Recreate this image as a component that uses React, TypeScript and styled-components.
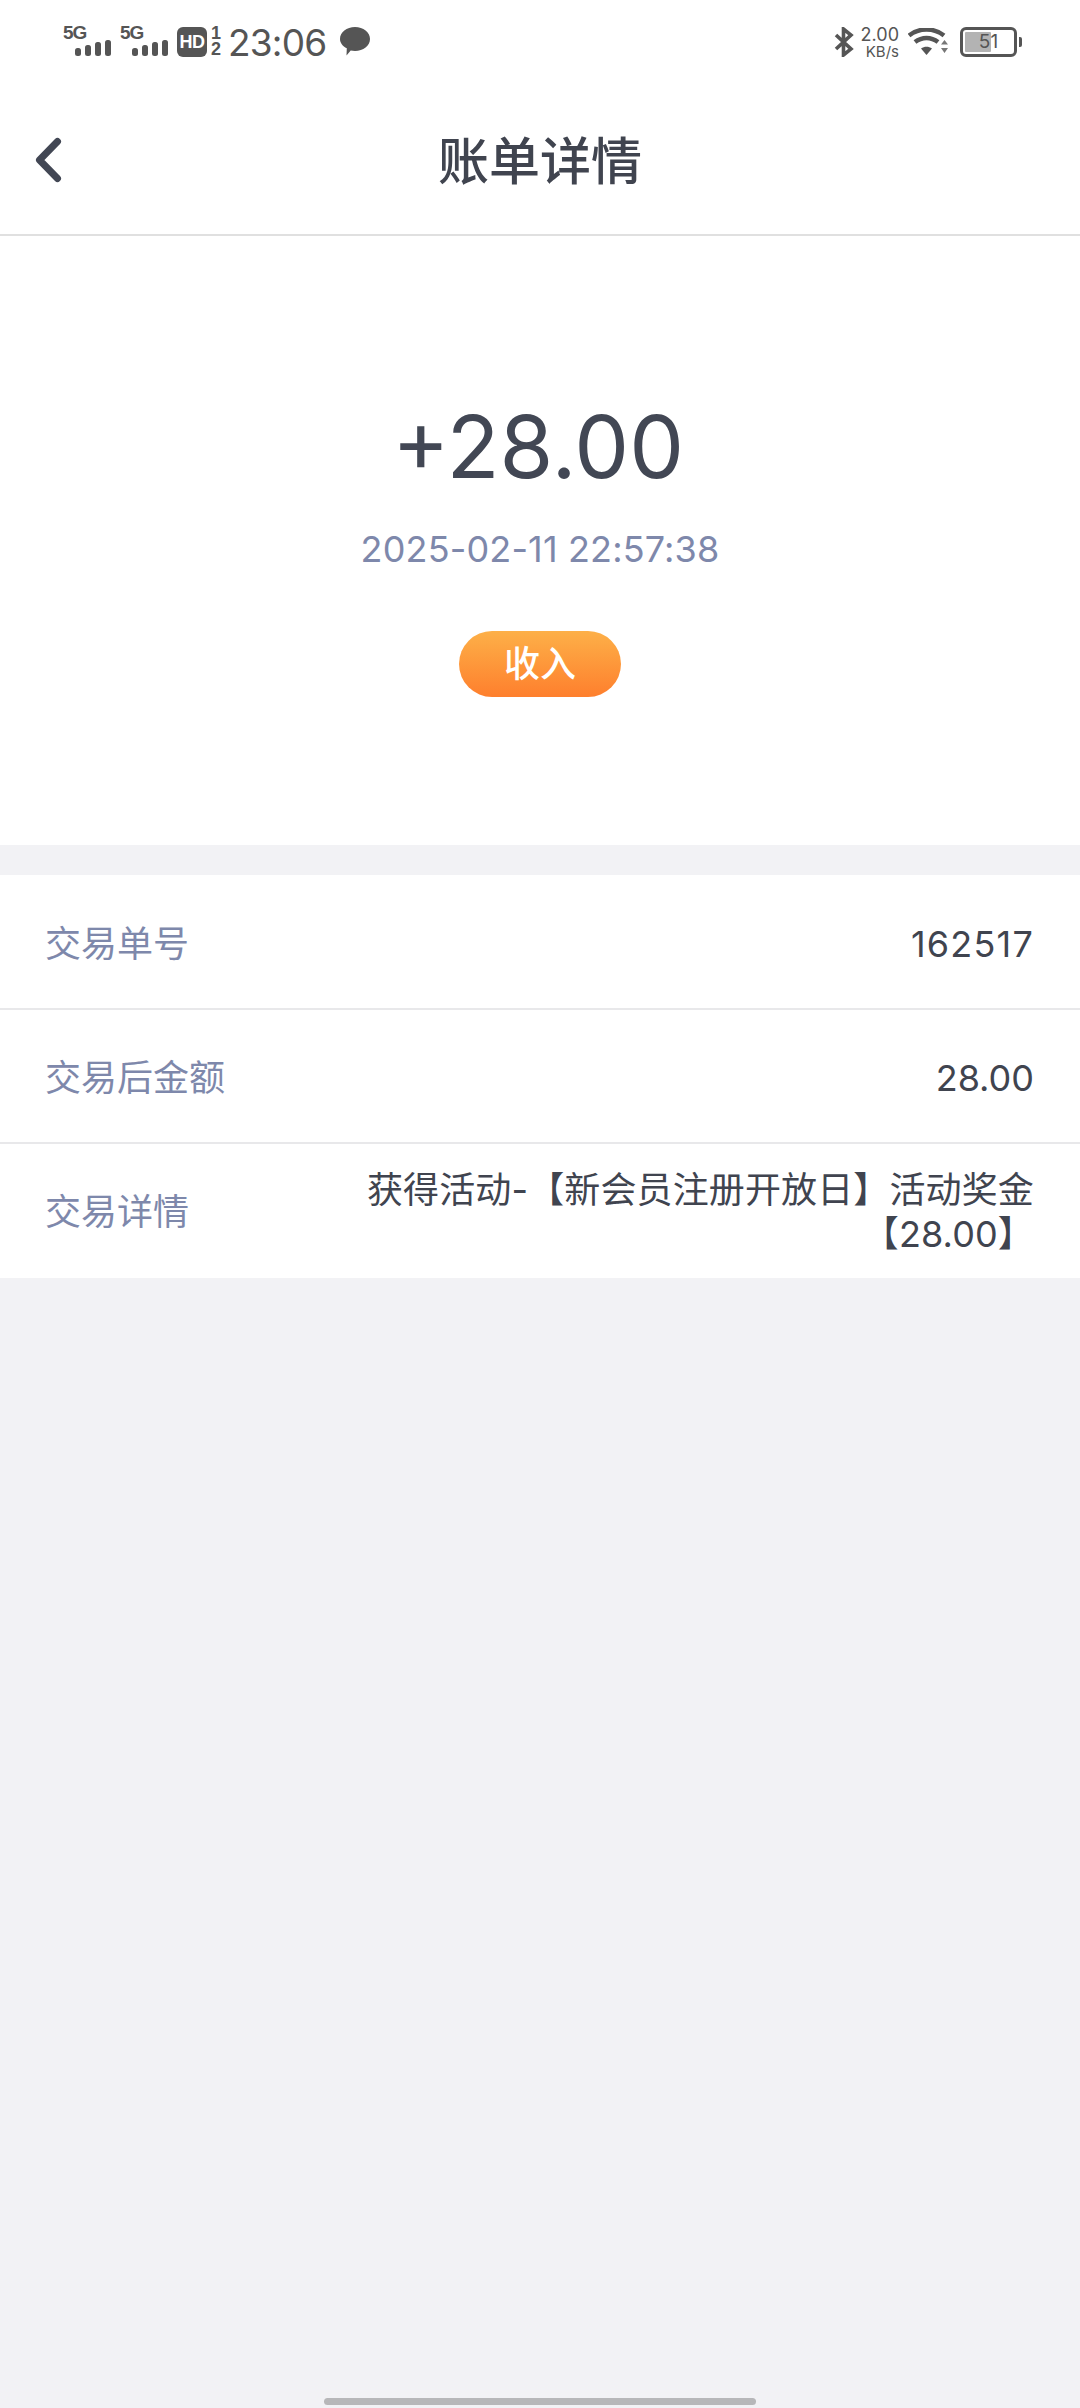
import React from 'react';
import styled, { createGlobalStyle } from 'styled-components';

const GlobalStyle = createGlobalStyle`
  html, body {
    margin: 0;
    padding: 0;
    background: #f2f2f5;
    font-family: Inter, "Noto Sans CJK SC", sans-serif;
  }
  * { box-sizing: border-box; }
`;

const Page = styled.div`
  width: 1080px;
  height: 2408px;
  display: flex;
  flex-direction: column;
  background: #f2f2f5;
  overflow: hidden;
`;

const StatusBar = styled.div`
  height: 80px;
  padding: 25px 63px 0 63px;
  display: flex;
  justify-content: space-between;
  align-items: flex-start;
  background: #fff;
  color: #555;
`;

const StatusGroup = styled.div`
  display: flex;
  align-items: flex-start;
`;

const Signal = styled.div`
  width: 57px;
  height: 32px;
  display: flex;
  flex-direction: column;
`;

const SignalLabel = styled.span`
  font: 700 19px/15px "Liberation Sans", sans-serif;
  letter-spacing: -1px;
`;

const HdBadge = styled.span`
  width: 30px;
  height: 30px;
  margin: 2px 4px 0 0;
  border-radius: 6px;
  background: #555;
  color: #fff;
  font: 700 18px/30px "Liberation Sans", sans-serif;
  text-align: center;
  letter-spacing: -0.5px;
`;

const SimSlots = styled.div`
  width: 19px;
  display: flex;
  flex-direction: column;
  font: 700 18px/16px "Liberation Sans", sans-serif;
`;

const Clock = styled.span`
  width: 108px;
  margin: -1px 0 0 -2px;
  font-size: 37px;
  line-height: 38px;
  letter-spacing: -0.8px;
  color: #555;
`;

const Speed = styled.div`
  width: 44px;
  display: flex;
  flex-direction: column;
  align-items: flex-end;
`;

const SpeedValue = styled.span`
  font-size: 18px;
  line-height: 19px;
`;

const SpeedUnit = styled.span`
  font-size: 15px;
  line-height: 14px;
  margin-top: 1px;
`;

const Battery = styled.div`
  position: relative;
  width: 57px;
  height: 30px;
  margin: 2px 0 0 12px;
  border: 3px solid #555;
  border-radius: 6px;
  padding: 2px;
  background: #fff;
  &::after {
    content: '';
    position: absolute;
    right: -8px;
    top: 7px;
    width: 3px;
    height: 10px;
    border-radius: 0 2px 2px 0;
    background: #555;
  }
`;

const BatteryFill = styled.div`
  height: 100%;
  background: #b3b3b3;
  border-radius: 1px;
`;

const BatteryText = styled.span`
  position: absolute;
  inset: 0;
  text-align: center;
  font-size: 19px;
  line-height: 24px;
  color: #555;
`;

const NavBar = styled.div`
  position: relative;
  height: 156px;
  display: flex;
  align-items: center;
  justify-content: center;
  background: #fff;
  border-bottom: 2px solid #e0e0e0;
`;

const BackButton = styled.button`
  position: absolute;
  left: 34px;
  top: 56px;
  width: 28px;
  height: 48px;
  padding: 0;
  border: 0;
  background: none;
  display: flex;
`;

const Title = styled.h1`
  margin: 10px 0 0;
  font-size: 51px;
  line-height: 60px;
  font-weight: 500;
  color: #40444f;
`;

const Hero = styled.section`
  height: 609px;
  padding-top: 161px;
  display: flex;
  flex-direction: column;
  align-items: center;
  background: #fff;
`;

const Amount = styled.div`
  margin-right: 4px;
  font-size: 87px;
  line-height: 100px;
  color: #424754;
`;

const DateText = styled.div`
  margin-top: 30px;
  font-size: 36px;
  line-height: 44px;
  letter-spacing: 0.15px;
  color: #7e88ab;
`;

const TypePill = styled.div`
  margin-top: 60px;
  width: 162px;
  height: 66px;
  border-radius: 33px;
  background: linear-gradient(180deg, #fdb048 0%, #fe7f2d 100%);
  color: #fff;
  font-size: 36px;
  font-weight: 500;
  line-height: 66px;
  text-align: center;
`;

const DetailList = styled.section`
  margin-top: 30px;
  background: #fff;
`;

const DetailRow = styled.div`
  height: 134px;
  padding: 4px 46px 0 45px;
  display: flex;
  align-items: center;
  justify-content: space-between;
  border-bottom: 2px solid #e8e8ea;
  &:first-child {
    height: 135px;
  }
  &:last-child {
    padding-top: 2px;
    border-bottom: 0;
  }
`;

const RowLabel = styled.span`
  flex: none;
  font-size: 36px;
  line-height: 44px;
  color: #7e88ab;
`;

const RowValue = styled.span<{ $tracking?: number }>`
  width: 700px;
  font-size: 36px;
  line-height: 44px;
  text-align: right;
  letter-spacing: ${(p) => p.$tracking ?? 0}px;
  color: #40444f;
`;

const HomeIndicator = styled.div`
  position: absolute;
  left: 324px;
  top: 2398px;
  width: 432px;
  height: 7px;
  border-radius: 4px;
  background: #b7b7b9;
`;

const SignalBars = () => (
  <svg width="36" height="16" viewBox="0 0 36 16" style={{ marginLeft: 12 }}>
    <rect x="0" y="8" width="6" height="8" rx="2.5" fill="#555" />
    <rect x="10" y="5" width="6" height="11" rx="2.5" fill="#555" />
    <rect x="20" y="2" width="6" height="14" rx="2.5" fill="#555" />
    <rect x="30" y="0" width="6" height="16" rx="2.5" fill="#555" />
  </svg>
);

const ChatBubble = () => (
  <svg width="30" height="29" viewBox="0 0 30 29" style={{ marginTop: 2, marginLeft: 4 }}>
    <path d="M15 0C23.3 0 30 5.3 30 12s-6.700 12-15 12c-1.500 0-3-.2-4.300-.5L6.500 28.500 6.800 21.300C2.600 19.100 0 15.800 0 12 0 5.300 6.700 0 15 0z" fill="#555" />
  </svg>
);

const Bluetooth = () => (
  <svg width="21" height="30" viewBox="0 0 21 30" style={{ marginTop: 2 }}>
    <path d="M2 8l15 14-7.500 6V2L17 8 2 22" fill="none" stroke="#555" strokeWidth="3.600" />
  </svg>
);

const Wifi = () => (
  <svg width="40" height="28" viewBox="0 0 40 28" style={{ marginTop: 3, marginLeft: 9 }}>
    <path d="M1 7.500C11-.5 26-.5 36 7.500" fill="none" stroke="#555" strokeWidth="4.500" />
    <path d="M7 14c7-5.500 16-5.500 23 0" fill="none" stroke="#555" strokeWidth="4.500" />
    <path d="M13 20.500c3.500-2.500 7.500-2.500 11 0L18.500 27z" fill="#555" />
    <path d="M33 16.500l3.500-4.500 3.500 4.500zM33 20l3.500 5 3.500-5z" fill="#777" />
  </svg>
);

const BackIcon = () => (
  <svg width="28" height="48" viewBox="0 0 28 48">
    <path d="M23.500 5.500 L5.500 24 L23.500 42.500" fill="none" stroke="#424754" strokeWidth="7" strokeLinecap="round" strokeLinejoin="round" />
  </svg>
);

const App = () => {
  return (
    <Page>
      <GlobalStyle />
      <StatusBar>
        <StatusGroup>
          <Signal>
            <SignalLabel>5G</SignalLabel>
            <SignalBars />
          </Signal>
          <Signal>
            <SignalLabel>5G</SignalLabel>
            <SignalBars />
          </Signal>
          <HdBadge>HD</HdBadge>
          <SimSlots>
            <span>1</span>
            <span>2</span>
          </SimSlots>
          <Clock>23:06</Clock>
          <ChatBubble />
        </StatusGroup>
        <StatusGroup>
          <Bluetooth />
          <Speed>
            <SpeedValue>2.00</SpeedValue>
            <SpeedUnit>KB/s</SpeedUnit>
          </Speed>
          <Wifi />
          <Battery>
            <BatteryFill style={{ width: '55%' }} />
            <BatteryText>51</BatteryText>
          </Battery>
        </StatusGroup>
      </StatusBar>
      <NavBar>
        <BackButton><BackIcon /></BackButton>
        <Title>账单详情</Title>
      </NavBar>
      <Hero>
        <Amount>+28.00</Amount>
        <DateText>2025-02-11 22:57:38</DateText>
        <TypePill>收入</TypePill>
      </Hero>
      <DetailList>
        <DetailRow>
          <RowLabel>交易单号</RowLabel>
          <RowValue $tracking={1.2}>162517</RowValue>
        </DetailRow>
        <DetailRow>
          <RowLabel>交易后金额</RowLabel>
          <RowValue>28.00</RowValue>
        </DetailRow>
        <DetailRow>
          <RowLabel>交易详情</RowLabel>
          <RowValue $tracking={0.13}>获得活动-【新会员注册开放日】活动奖金【28.00】</RowValue>
        </DetailRow>
      </DetailList>
      <HomeIndicator />
    </Page>
  );
};

export default App;
